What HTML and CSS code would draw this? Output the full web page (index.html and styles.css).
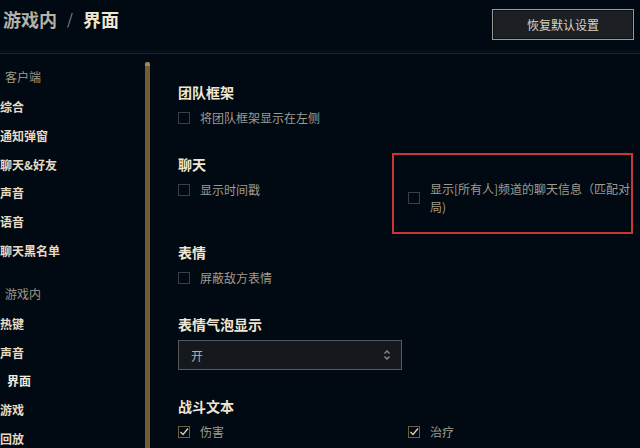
FILE: index.html
```html
<!DOCTYPE html>
<html lang="zh">
<head>
<meta charset="utf-8">
<link rel="stylesheet" href="styles.css">
</head>
<body>
<header class="topbar">
  <h1 class="crumb"><span class="crumb-parent">游戏内</span><span class="crumb-sep">/</span><span class="crumb-current">界面</span></h1>
  <button class="reset-btn">恢复默认设置</button>
</header>
<div class="main">
  <nav class="sidebar">
    <div class="group-label">客户端</div>
    <div class="nav-item">综合</div>
    <div class="nav-item">通知弹窗</div>
    <div class="nav-item">聊天&amp;好友</div>
    <div class="nav-item">声音</div>
    <div class="nav-item">语音</div>
    <div class="nav-item">聊天黑名单</div>
    <div class="group-label group-gap">游戏内</div>
    <div class="nav-item">热键</div>
    <div class="nav-item">声音</div>
    <div class="nav-item active">界面</div>
    <div class="nav-item">游戏</div>
    <div class="nav-item">回放</div>
  </nav>
  <div class="scrolltrack"><div class="scrollthumb"></div></div>
  <section class="content">
    <div class="section">
      <h2 class="sec-title">团队框架</h2>
      <div class="row">
        <label class="opt"><span class="box"></span><span class="opt-text">将团队框架显示在左侧</span></label>
      </div>
    </div>
    <div class="section">
      <h2 class="sec-title">聊天</h2>
      <div class="row cols">
        <label class="opt"><span class="box"></span><span class="opt-text">显示时间戳</span></label>
        <label class="opt wide"><span class="box"></span><span class="opt-text narrow">显示[所有人]频道的聊天信息（匹配对局)</span><span class="highlight"></span></label>
      </div>
    </div>
    <div class="section">
      <h2 class="sec-title">表情</h2>
      <div class="row">
        <label class="opt"><span class="box"></span><span class="opt-text">屏蔽敌方表情</span></label>
      </div>
    </div>
    <div class="section">
      <h2 class="sec-title">表情气泡显示</h2>
      <div class="select">
        <span class="select-value">开</span>
        <svg class="select-arrows" width="8" height="12" viewBox="0 0 8 12"><path d="M1.5 4.5 L4 2 L6.5 4.5 M1.5 7.5 L4 10 L6.5 7.5" fill="none" stroke="#8c8a84" stroke-width="1.4"/></svg>
      </div>
    </div>
    <div class="section last">
      <h2 class="sec-title">战斗文本</h2>
      <div class="row cols">
        <label class="opt"><span class="box checked"><svg width="10" height="10" viewBox="0 0 10 10"><path d="M1.5 5 L4 7.5 L9 1.5" fill="none" stroke="#d8cdb0" stroke-width="1.4"/></svg></span><span class="opt-text">伤害</span></label>
        <label class="opt"><span class="box checked"><svg width="10" height="10" viewBox="0 0 10 10"><path d="M1.5 5 L4 7.5 L9 1.5" fill="none" stroke="#d8cdb0" stroke-width="1.4"/></svg></span><span class="opt-text">治疗</span></label>
      </div>
    </div>
  </section>
</div>
</body>
</html>
```
FILE: styles.css
```css
* { box-sizing: border-box; }
html, body {
  margin: 0;
  padding: 0;
  background: #010a13;
  width: 640px;
  height: 448px;
  overflow: hidden;
  font-family: "Noto Sans CJK SC", "Noto Sans", sans-serif;
}
.topbar {
  height: 54px;
  display: flex;
  align-items: flex-start;
  justify-content: space-between;
  border-bottom: 1px solid #1a2329;
  box-shadow: 0 -3px 0 #050f17 inset;
}
.crumb {
  margin: 6px 0 0 3px;
  font-size: 18px;
  line-height: 26px;
  font-weight: 700;
  display: flex;
  align-items: center;
}
.crumb-parent { color: #b4b1a8; }
.crumb-sep { color: #8a8880; margin: 0 10px 0 10px; font-weight: 400; font-size: 15px; }
.crumb-current { color: #f0e6d2; }
.reset-btn {
  margin: 9px 6px 0 0;
  width: 142px;
  height: 31px;
  background: #1c2025;
  border: 1px solid #9a9a98;
  box-shadow: inset 0 0 0 1px #0c1116;
  color: #d9d2c2;
  font-family: "Noto Sans CJK SC", sans-serif;
  font-size: 12px;
  padding: 0;
}
.main {
  display: flex;
  height: 394px;
}
.sidebar {
  width: 145px;
  padding-top: 7px;
  flex: none;
}
.group-label {
  height: 31px;
  line-height: 31px;
  padding-left: 5px;
  font-size: 12px;
  color: #a09b8c;
  margin-bottom: 1px;
}
.group-gap { margin-top: 12px; }
.nav-item {
  height: 28.8px;
  line-height: 28.8px;
  font-size: 12px;
  font-weight: 700;
  color: #e6dcc4;
  padding-left: 0;
}
.nav-item.active { padding-left: 7px; color: #f3ecdc; }
.scrolltrack {
  width: 5px;
  flex: none;
  padding-top: 8px;
}
.scrollthumb {
  height: 100%;
  background: #715c33;
  border-top: 4px solid #9c8a66;
  border-radius: 2px 2px 0 0;
}
.content {
  flex: 1;
  padding: 28px 10px 0 28px;
}
.section { margin-bottom: 26px; }
.section.last { margin-top: 2px; }
.sec-title {
  margin: 0 0 6px 0;
  font-size: 14px;
  line-height: 20px;
  font-weight: 700;
  color: #f0e6d2;
}
.row { display: flex; align-items: flex-start; }
.row.cols { display: grid; grid-template-columns: 230px 222px; }
.opt {
  display: flex;
  align-items: center;
  min-height: 20px;
  position: relative;
}
.box {
  width: 12px;
  height: 12px;
  border: 1px solid #3e3f42;
  flex: none;
  margin-right: 10px;
  display: flex;
  align-items: center;
  justify-content: center;
}
.box.checked { border-color: #6e5d3e; }
.opt-text {
  font-size: 12px;
  line-height: 18px;
  color: #a09b8c;
}
.opt-text.narrow { width: 206px; flex: none; }
.highlight {
  position: absolute;
  left: -16px;
  top: -27px;
  width: 241px;
  height: 81px;
  border: 2px solid #c9363a;
  pointer-events: none;
}
.select {
  width: 224px;
  height: 30px;
  border: 1px solid #57585a;
  background: #15191e;
  display: flex;
  align-items: center;
  justify-content: space-between;
  padding: 0 10px 0 12px;
}
.select-value { font-size: 12px; color: #b5b0a4; }
```
